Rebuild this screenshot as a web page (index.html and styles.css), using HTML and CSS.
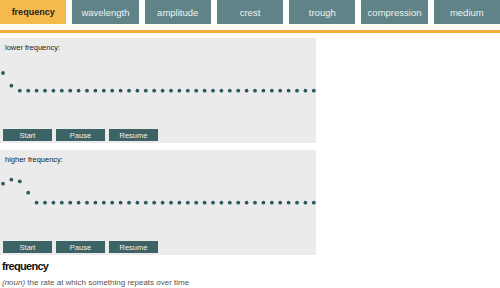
FILE: index.html
```html
<!DOCTYPE html>
<html lang="en">
<head>
  <meta charset="UTF-8" />
  <title>Wave Vocabulary</title>
  <link rel="stylesheet" href="styles.css">
</head>
<body>

<nav class="tabs">
  <a href="#" class="tab active">frequency</a>
  <a href="#" class="tab">wavelength</a>
  <a href="#" class="tab">amplitude</a>
  <a href="#" class="tab">crest</a>
  <a href="#" class="tab">trough</a>
  <a href="#" class="tab">compression</a>
  <a href="#" class="tab">medium</a>
</nav>
<div class="rule"></div>

<div class="demo">
  <div class="demo-label">lower frequency:</div>
  <svg class="wave" id="waveLow" width="316" height="73"></svg>
  <div class="controls">
    <button>Start</button>
    <button>Pause</button>
    <button>Resume</button>
  </div>
</div>

<div class="demo">
  <div class="demo-label">higher frequency:</div>
  <svg class="wave" id="waveHigh" width="316" height="73"></svg>
  <div class="controls">
    <button>Start</button>
    <button>Pause</button>
    <button>Resume</button>
  </div>
</div>

<h3 class="term">frequency</h3>
<p class="definition"><em>(noun)</em> the rate at which something repeats over time</p>

<script>
  // vertical offsets of the first few particles, the rest sit at rest
  const waves = {
    waveLow: [-17.7, -5],
    waveHigh: [-19, -23, -21.3, -10]
  };

  const baseline = 36.7;
  const count = 38;
  const spacing = 8.4;

  Object.keys(waves).forEach(id => {
    const svg = document.getElementById(id);
    let html = "";
    for (let i = 0; i < count; i++) {
      const dy = waves[id][i] || 0;
      const x = 3 + i * spacing;
      html += `<circle cx="${x.toFixed(1)}" cy="${(baseline + dy).toFixed(1)}" r="1.9"></circle>`;
    }
    svg.innerHTML = html;
  });
</script>
</body>
</html>
```

FILE: styles.css
```css
body {
  margin: 0;
  font-family: 'Liberation Sans', Arial, sans-serif;
  background-color: #fff;
  color: #333;
}

.tabs {
  display: flex;
  gap: 6px;
  height: 24px;
}

.tab {
  flex: 1;
  display: flex;
  align-items: center;
  justify-content: center;
  background-color: #5f8386;
  color: #eef3f3;
  font-size: 9.5px;
  text-decoration: none;
}

.tab.active {
  background-color: #f6b94b;
  color: #1e1e1e;
  font-weight: bold;
  font-size: 9px;
}

.rule {
  height: 3px;
  background-color: #f4ad38;
  margin: 6px 0 5px 0;
}

.demo {
  width: 316px;
  height: 105px;
  background-color: #ebebeb;
  display: flex;
  flex-direction: column;
}

.demo + .demo {
  margin-top: 7px;
}

.demo-label {
  height: 16px;
  box-sizing: border-box;
  padding: 6px 0 0 5px;
  font-size: 7.5px;
  line-height: 8px;
  color: #222;
}

.wave {
  display: block;
  fill: #2f5a5f;
}

.controls {
  display: flex;
  gap: 4px;
  padding: 2px 3px;
}

.controls button {
  width: 49px;
  height: 12px;
  padding: 0;
  border: none;
  background-color: #3e6367;
  color: #eef2f2;
  font-family: 'Liberation Sans', Arial, sans-serif;
  font-size: 7.5px;
  cursor: pointer;
}

.term {
  margin: 5px 0 0 2px;
  font-family: 'Liberation Sans', Arial, sans-serif;
  font-size: 11px;
  font-stretch: condensed;
  line-height: 13px;
  letter-spacing: -0.7px;
  color: #111;
}

.definition {
  margin: 5px 0 0 2px;
  font-size: 8px;
  line-height: 9px;
  color: #555;
}
```
